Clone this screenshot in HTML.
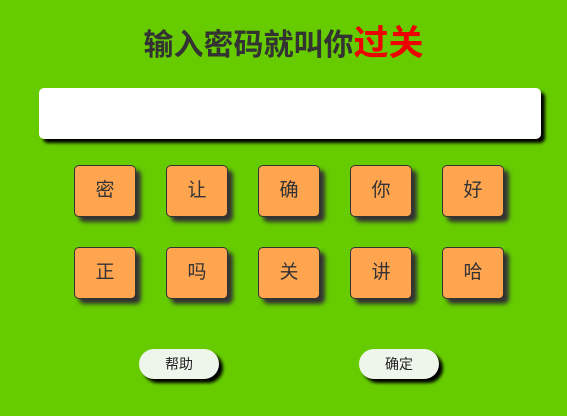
<!DOCTYPE html>
<html><head><meta charset="utf-8"><style>
body{margin:0;width:567px;height:416px;background:#66cc00;position:relative;overflow:hidden;font-family:"Liberation Sans","Noto Sans CJK SC",sans-serif}
h1{position:absolute;top:24px;left:0;width:567px;margin:0;text-align:center;font-size:30px;font-weight:bold;color:#333;line-height:40px}
h1 span{color:#e00;font-size:35px}
.inp{position:absolute;left:39px;top:88px;width:502px;height:51px;background:#fff;border-radius:5px;box-shadow:4px 4px 3px #000}
.k{position:absolute;width:60px;height:50px;border:1px solid #333;border-radius:5px;background:#ffa54f;box-shadow:5px 5px 4px #333;text-align:center;line-height:50px;font-size:19px;color:#333}
.b{position:absolute;top:349px;width:80px;height:30px;border-radius:15px;background:#eef6ec;box-shadow:4px 4px 3px #000;text-align:center;line-height:30px;font-size:14px;color:#222}
</style></head><body>
<h1>输入密码就叫你<span>过关</span></h1>
<div class="inp"></div>
<div class="k" style="left:74px;top:165px">密</div>
<div class="k" style="left:166px;top:165px">让</div>
<div class="k" style="left:258px;top:165px">确</div>
<div class="k" style="left:350px;top:165px">你</div>
<div class="k" style="left:442px;top:165px">好</div>
<div class="k" style="left:74px;top:247px">正</div>
<div class="k" style="left:166px;top:247px">吗</div>
<div class="k" style="left:258px;top:247px">关</div>
<div class="k" style="left:350px;top:247px">讲</div>
<div class="k" style="left:442px;top:247px">哈</div>
<div class="b" style="left:139px">帮助</div>
<div class="b" style="left:359px">确定</div>
</body></html>
